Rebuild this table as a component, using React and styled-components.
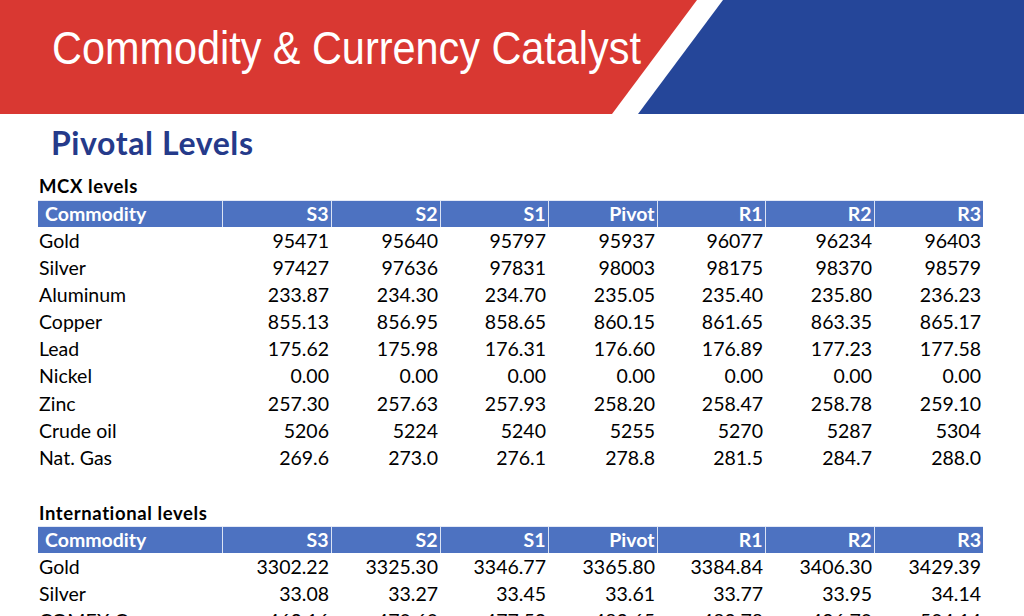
import React from "react";
import styled, { createGlobalStyle } from "styled-components";

const Global = createGlobalStyle`
  html, body { margin: 0; padding: 0; background: #ffffff; }
  body { width: 1024px; height: 616px; overflow: hidden; font-family: Lato, "Open Sans", sans-serif; color: #000; }
`;

const Page = styled.div`
  width: 1024px;
  height: 616px;
  overflow: hidden;
  display: flex;
  flex-direction: column;
`;

const Banner = styled.header`
  position: relative;
  height: 114px;
  flex: none;
  background: #d93832;
  padding: 25px 0 0 52px;
  box-sizing: border-box;
  overflow: hidden;
  &::before, &::after {
    content: "";
    position: absolute;
    inset: 0;
  }
  &::before {
    background: #ffffff;
    clip-path: polygon(697px 0, 1024px 0, 1024px 114px, 612px 114px);
  }
  &::after {
    background: #254699;
    clip-path: polygon(723px 0, 1024px 0, 1024px 114px, 638px 114px);
  }
`;

const Title = styled.h1`
  position: relative;
  z-index: 1;
  margin: 0;
  font-family: "Liberation Sans", Arial, sans-serif;
  font-weight: 400;
  font-size: 46px;
  line-height: 46px;
  color: #ffffff;
  white-space: nowrap;
  display: inline-block;
  transform: scaleX(0.9);
  transform-origin: left center;
`;

const Content = styled.main`
  padding: 0 0 0 38px;
  display: flex;
  flex-direction: column;
`;

const Heading = styled.h2`
  margin: 11px 0 0 13px;
  font-family: Lato, sans-serif;
  font-weight: 700;
  font-size: 32px;
  letter-spacing: 0.6px;
  line-height: 36px;
  color: #253a8a;
`;

const SectionLabel = styled.h3`
  margin: ${(p) => p.$top}px 0 ${(p) => p.$bottom}px 1px;
  font-family: Lato, sans-serif;
  font-weight: 700;
  font-size: 18.5px;
  letter-spacing: 0.6px;
  line-height: 22px;
  color: #000;
`;

const Table = styled.table`
  border-collapse: collapse;
  table-layout: fixed;
  width: 945px;
  font-family: Lato, sans-serif;
  font-size: 19.5px;
`;

const HeadCell = styled.th`
  background: #4d72c1;
  color: #ffffff;
  font-weight: 700;
  height: 26px;
  line-height: 26px;
  padding: 0 ${(p) => (p.$first ? "0" : "2px")} 0 ${(p) => (p.$first ? "7px" : "0")};
  text-align: ${(p) => (p.$first ? "left" : "right")};
  border-left: ${(p) => (p.$first ? "none" : "1px solid #dbe3f4")};
  border-top: 1px solid #e4e9f6;
  box-sizing: border-box;
  white-space: nowrap;
`;

const Cell = styled.td`
  height: 27.1px;
  line-height: 27.1px;
  padding: 0 ${(p) => (p.$first ? "0" : "2px")} 0 ${(p) => (p.$first ? "1px" : "0")};
  text-align: ${(p) => (p.$first ? "left" : "right")};
  box-sizing: border-box;
  white-space: nowrap;
  color: #000;
`;

const COLS = ["S3", "S2", "S1", "Pivot", "R1", "R2", "R3"];
const WIDTHS = [184, 109, 109, 108, 109, 108, 109, 109];

const MCX = [
  ["Gold", "95471", "95640", "95797", "95937", "96077", "96234", "96403"],
  ["Silver", "97427", "97636", "97831", "98003", "98175", "98370", "98579"],
  ["Aluminum", "233.87", "234.30", "234.70", "235.05", "235.40", "235.80", "236.23"],
  ["Copper", "855.13", "856.95", "858.65", "860.15", "861.65", "863.35", "865.17"],
  ["Lead", "175.62", "175.98", "176.31", "176.60", "176.89", "177.23", "177.58"],
  ["Nickel", "0.00", "0.00", "0.00", "0.00", "0.00", "0.00", "0.00"],
  ["Zinc", "257.30", "257.63", "257.93", "258.20", "258.47", "258.78", "259.10"],
  ["Crude oil", "5206", "5224", "5240", "5255", "5270", "5287", "5304"],
  ["Nat. Gas", "269.6", "273.0", "276.1", "278.8", "281.5", "284.7", "288.0"],
];

const INTL = [
  ["Gold", "3302.22", "3325.30", "3346.77", "3365.80", "3384.84", "3406.30", "3429.39"],
  ["Silver", "33.08", "33.27", "33.45", "33.61", "33.77", "33.95", "34.14"],
  ["COMEX Copper", "463.16", "470.60", "477.52", "483.65", "489.78", "496.70", "504.14"],
];

function LevelsTable({ rows }) {
  return (
    <Table>
      <colgroup>
        {WIDTHS.map((w, i) => (
          <col key={i} style={{ width: w }} />
        ))}
      </colgroup>
      <thead>
        <tr>
          <HeadCell $first>Commodity</HeadCell>
          {COLS.map((c) => (
            <HeadCell key={c}>{c}</HeadCell>
          ))}
        </tr>
      </thead>
      <tbody>
        {rows.map((r) => (
          <tr key={r[0]}>
            {r.map((v, i) => (
              <Cell key={i} $first={i === 0}>
                {v}
              </Cell>
            ))}
          </tr>
        ))}
      </tbody>
    </Table>
  );
}

export default function App() {
  return (
    <Page>
      <Global />
      <Banner>
        <Title>Commodity &amp; Currency Catalyst</Title>
      </Banner>
      <Content>
        <Heading>Pivotal Levels</Heading>
        <SectionLabel $top={14} $bottom={3}>MCX levels</SectionLabel>
        <LevelsTable rows={MCX} />
        <SectionLabel $top={31} $bottom={2}>International levels</SectionLabel>
        <LevelsTable rows={INTL} />
      </Content>
    </Page>
  );
}
